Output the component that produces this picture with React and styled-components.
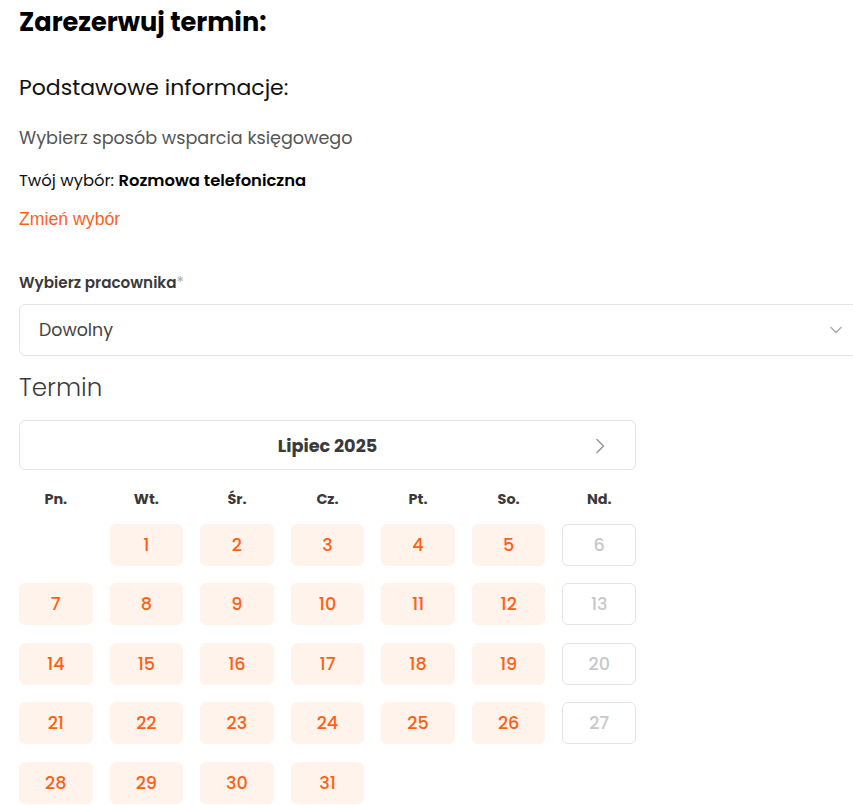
import React from 'react';
import styled, { createGlobalStyle } from 'styled-components';

const GlobalStyle = createGlobalStyle`
  html, body {
    margin: 0;
    padding: 0;
    background: #ffffff;
    overflow: hidden;
  }
  body {
    font-family: Poppins, Inter, "Noto Sans", sans-serif;
    color: #111111;
  }
`

const Page = styled.div`
  padding: 0 0 0 19px;
  width: 853px;
  box-sizing: border-box;
`

const Title = styled.h1`
  margin: 0;
  padding-top: 7px;
  font-size: 25.6px;
  line-height: 30px;
  font-weight: 700;
  color: #000000;
`

const Subtitle = styled.h2`
  margin: 37px 0 0;
  font-size: 22px;
  line-height: 28px;
  font-weight: 400;
  color: #111111;
`

const Lead = styled.p`
  margin: 24px 0 0;
  font-size: 17.6px;
  line-height: 24px;
  color: #555555;
`

const Choice = styled.p`
  margin: 21px 0 0;
  font-size: 16.4px;
  line-height: 20px;
  color: #111111;

  strong {
    font-weight: 600;
    color: #000000;
  }
`

const ChangeLink = styled.a`
  display: inline-block;
  margin-top: 18px;
  font-family: "Liberation Sans", Arial, sans-serif;
  font-size: 17.7px;
  line-height: 20px;
  color: #ff5f1f;
  text-decoration: none;
`

const Label = styled.label`
  display: block;
  margin-top: 41px;
  font-size: 15.2px;
  line-height: 20px;
  font-weight: 600;
  color: #3a3a3a;

  span {
    color: #aaaaaa;
    font-weight: 400;
  }
`

const Select = styled.div`
  margin-top: 11px;
  width: 860px;
  height: 52px;
  box-sizing: border-box;
  border: 1px solid #e4e4e4;
  border-radius: 6px;
  display: flex;
  align-items: center;
  justify-content: space-between;
  padding: 0 0 0 19px;
  font-size: 17.4px;
  color: #444444;
`

const SelectChevron = styled.svg`
  margin-right: 36px;
`

const SectionTitle = styled.h3`
  margin: 14px 0 0;
  font-size: 24.6px;
  line-height: 36px;
  font-weight: 300;
  color: #3c3c3c;
`

const Calendar = styled.div`
  margin-top: 14px;
  width: 617px;
`

const MonthBar = styled.div`
  position: relative;
  height: 50px;
  box-sizing: border-box;
  border: 1px solid #e4e4e4;
  border-radius: 6px;
  display: flex;
  align-items: center;
  justify-content: center;
  font-size: 17.7px;
  font-weight: 700;
  color: #3a3a3a;
`

const NextButton = styled.svg`
  position: absolute;
  right: 30px;
  top: 17px;
`

const Grid = styled.div`
  display: grid;
  grid-template-columns: repeat(7, 1fr);
  column-gap: 17px;
  row-gap: 17.5px;
`

const WeekDay = styled.div`
  margin-top: 19px;
  margin-bottom: -3px;
  text-align: center;
  font-size: 14.4px;
  line-height: 20px;
  font-weight: 700;
  color: #3a3a3a;
`

const Day = styled.div`
  height: 42px;
  box-sizing: border-box;
  border-radius: 6px;
  display: flex;
  align-items: center;
  justify-content: center;
  font-size: 17.6px;
  font-weight: 500;
  background: ${p => (p.$off ? '#ffffff' : '#fff3ec')};
  border: 1px solid ${p => (p.$off ? '#e4e4e4' : '#fff3ec')};
  color: ${p => (p.$off ? '#c8c8c8' : '#ff6014')};
  grid-column: ${p => p.$start || 'auto'};
`

const weekDays = ['Pn.', 'Wt.', 'Śr.', 'Cz.', 'Pt.', 'So.', 'Nd.']
const days = Array.from({ length: 31 }, (_, i) => i + 1)

// July 2025 starts on a Tuesday, so Sundays are 6, 13, 20, 27
const isSunday = d => d % 7 === 6

export default function App() {
  return (
    <Page>
      <GlobalStyle />
      <Title>Zarezerwuj termin:</Title>
      <Subtitle>Podstawowe informacje:</Subtitle>
      <Lead>Wybierz sposób wsparcia księgowego</Lead>
      <Choice>Twój wybór: <strong>Rozmowa telefoniczna</strong></Choice>
      <ChangeLink href="#">Zmień wybór</ChangeLink>

      <Label>Wybierz pracownika<span>*</span></Label>
      <Select>
        Dowolny
        <SelectChevron width="12" height="8" viewBox="0 0 12 8" fill="none">
          <path d="M1 1.5l5 5 5-5" stroke="#a8a8a8" strokeWidth="1.4" strokeLinecap="round" strokeLinejoin="round" />
        </SelectChevron>
      </Select>

      <SectionTitle>Termin</SectionTitle>
      <Calendar>
        <MonthBar>
          Lipiec 2025
          <NextButton width="10" height="16" viewBox="0 0 10 16" fill="none">
            <path d="M2 1.5l6.5 6.5-6.5 6.5" stroke="#9a9a9a" strokeWidth="1.6" strokeLinecap="round" strokeLinejoin="round" />
          </NextButton>
        </MonthBar>
        <Grid>
          {weekDays.map(d => <WeekDay key={d}>{d}</WeekDay>)}
          {days.map(d => (
            <Day key={d} $start={d === 1 ? 2 : null} $off={isSunday(d)}>
              {d}
            </Day>
          ))}
        </Grid>
      </Calendar>
    </Page>
  )
}
